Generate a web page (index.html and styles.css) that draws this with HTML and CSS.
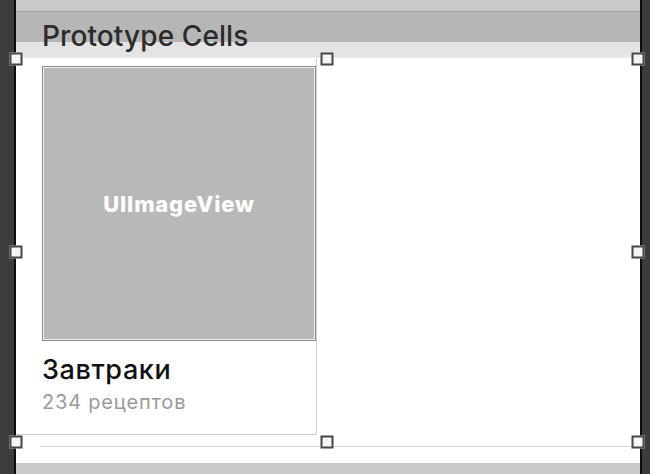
FILE: index.html
```html
<!DOCTYPE html>
<html lang="ru">
<head>
    <meta charset="UTF-8" />
    <title>Prototype Cells</title>
    <link rel="stylesheet" href="styles.css">
</head>
<body>
<div class="screen">
    <div class="topbar"></div>
    <div class="section-header">
        <span class="section-title">Prototype Cells</span>
    </div>

    <div class="collection">
        <div class="cell">
            <div class="image-view">UIImageView</div>
            <div class="cell-title">Завтраки</div>
            <div class="cell-subtitle">234 рецептов</div>
        </div>
        <div class="separator"></div>

        <div class="selection">
            <span class="handle h-tl"></span>
            <span class="handle h-tc"></span>
            <span class="handle h-tr"></span>
            <span class="handle h-ml"></span>
            <span class="handle h-mr"></span>
            <span class="handle h-bl"></span>
            <span class="handle h-bc"></span>
            <span class="handle h-br"></span>
        </div>
    </div>

    <div class="bottombar"></div>
</div>
</body>
</html>
```

FILE: styles.css
```css
body {
    margin: 0;
    background: #3c3c3c;
    font-family: Inter, "Noto Sans", sans-serif;
    height: 474px;
    overflow: hidden;
}

.screen {
    width: 624px;
    margin-left: 14px;
    border-left: 2px solid #0e0e0e;
    border-right: 2px solid #0e0e0e;
    height: 474px;
    display: flex;
    flex-direction: column;
    background: #fff;
}

.topbar {
    height: 11px;
    background: #c9c9c9;
    border-bottom: 1px solid #9c9c9c;
}

.section-header {
    height: 45px;
    background: linear-gradient(#b6b6b6 0 30px, #e4e4e4 30px);
    border-bottom: 1px solid #ededed;
    padding-left: 26px;
    display: flex;
    align-items: flex-start;
}

.section-title {
    font-size: 28px;
    font-weight: 500;
    color: #2b2b2b;
    line-height: 1;
    margin-top: 10px;
    letter-spacing: 0.1px;
}

.collection {
    position: relative;
    height: 405px;
    background: #fff;
}

.cell {
    width: 274px;
    height: 368px;
    padding: 8px 0 0 26px;
    border-right: 1px solid #cfcfcf;
    border-bottom: 1px solid #cfcfcf;
}

.image-view {
    width: 272px;
    height: 273px;
    border: 1px solid #8c8c8c;
    box-shadow: inset 0 0 0 1px #efefef;
    background: #b8b8b8;
    color: #fff;
    font-weight: 800;
    font-size: 22px;
    letter-spacing: 0.8px;
    display: flex;
    align-items: center;
    justify-content: center;
}

.cell-title {
    margin-top: 12px;
    font-size: 27px;
    font-weight: 500;
    color: #111;
    line-height: 34px;
    letter-spacing: 0.6px;
}

.cell-subtitle {
    margin-top: 3px;
    font-size: 20px;
    color: #9a9a9a;
    line-height: 24px;
    letter-spacing: 0.8px;
}

.separator {
    margin: 11px 0 0 24px;
    height: 1px;
    background: #d4d4d4;
}

.bottombar {
    flex: 1;
    background: #c9c9c9;
}

.selection {
    position: absolute;
    left: 0;
    top: 0;
    width: 622px;
    height: 384px;
    pointer-events: none;
}

.handle {
    position: absolute;
    width: 9px;
    height: 9px;
    border: 2px solid #474747;
    background: #f5f5f5;
    transform: translate(-50%, -50%);
}

.h-tl { left: 0; top: 1px; }
.h-tc { left: 50%; top: 1px; }
.h-tr { left: 100%; top: 1px; }
.h-ml { left: 0; top: 194px; }
.h-mr { left: 100%; top: 194px; }
.h-bl { left: 0; top: 100%; }
.h-bc { left: 50%; top: 100%; }
.h-br { left: 100%; top: 100%; }
```
